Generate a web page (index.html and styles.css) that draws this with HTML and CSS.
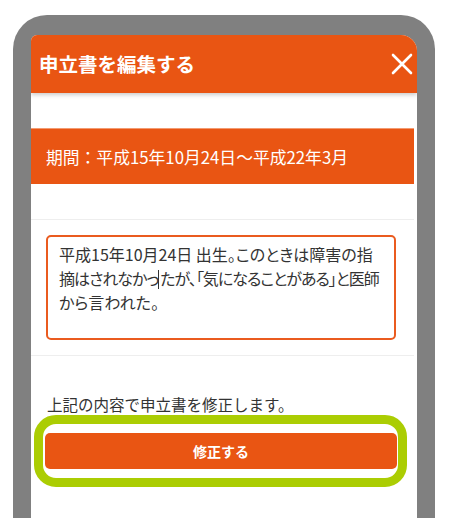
FILE: index.html
```html
<!DOCTYPE html>
<html lang="ja">
<head>
    <meta charset="UTF-8">
    <meta name="viewport" content="width=device-width, initial-scale=1.0">
    <title>申立書を編集する</title>
    <link rel="stylesheet" href="styles.css">
</head>
<body>

    <div class="phone">
        <div class="screen">
            <div class="modal-head">
                <h1 class="modal-title">申立書を編集する</h1>
                <button class="close-btn" aria-label="閉じる">
                    <svg width="22" height="22" viewBox="0 0 22 22">
                        <path d="M2 2 L20 20 M20 2 L2 20" stroke="#fff" stroke-width="2.6" stroke-linecap="round"/>
                    </svg>
                </button>
            </div>

            <div class="modal-body">
                <div class="period">期間：平成15年10月24日～平成22年3月</div>

                <div class="divider"></div>

                <div class="memo-wrap">
                    <div class="memo">平成15年10月24日 出生。このときは障害の指<br><span class="tight">摘はされなかっ<span class="caret"></span>たが、「気になることがある」と医師</span><br>から言われた。</div>
                </div>

                <div class="divider"></div>

                <p class="note">上記の内容で申立書を修正します。</p>

                <div class="ring">
                    <button class="submit-btn">修正する</button>
                </div>
            </div>
        </div>
    </div>

</body>
</html>
```

FILE: styles.css
```css
body {
    margin: 0;
    padding: 0;
    background-color: #fff;
    font-family: "Noto Sans CJK JP", "Noto Sans", sans-serif;
    color: #333;
}

.phone {
    width: 422px;
    height: 503px;
    margin: 15px 0 0 13px;
    padding: 20px 18px 0 18px;
    box-sizing: border-box;
    background-color: #808080;
    border-radius: 34px 34px 0 0;
}

.screen {
    height: 100%;
    background-color: #fff;
    border-radius: 6px 16px 0 0;
    overflow: hidden;
}

.modal-head {
    position: relative;
    height: 58px;
    padding: 0 3px 0 8px;
    display: flex;
    align-items: center;
    justify-content: space-between;
    background-color: #e95513;
    box-shadow: 0 2px 4px rgba(0, 0, 0, 0.2);
}

.modal-title {
    margin: 0;
    font-size: 19.5px;
    font-weight: bold;
    color: #fff;
    line-height: 1;
}

.close-btn {
    width: 24px;
    height: 24px;
    padding: 0;
    border: none;
    background: none;
    display: flex;
    align-items: center;
    justify-content: center;
    cursor: pointer;
}

.modal-body {
    margin-right: 3px;
    padding-top: 35px;
}

.period {
    height: 55px;
    padding-left: 15px;
    display: flex;
    align-items: center;
    border-top: 1px solid #f39a70;
    background-color: #e95513;
    color: #fff;
    font-size: 16.8px;
}

.divider {
    margin-top: 35px;
    border-top: 1px solid #eeeeee;
}

.memo-wrap + .divider {
    margin-top: 0;
}

.memo-wrap {
    padding: 15px 18px 15px 15px;
}

.memo {
    height: 105px;
    box-sizing: border-box;
    padding: 5px 8px 0 11px;
    border: 2px solid #ea5b1f;
    border-radius: 5px;
    font-size: 16px;
    line-height: 24px;
    white-space: nowrap;
    font-feature-settings: "palt";
    color: #333;
}

.tight {
    letter-spacing: -1px;
}

.caret {
    display: inline-block;
    width: 1px;
    height: 19px;
    margin: 0 1px 0 0;
    vertical-align: -4px;
    background-color: #333;
}

.note {
    margin: 37px 0 0 0;
    padding-left: 16px;
    font-size: 15.5px;
    line-height: 22px;
}

.ring {
    margin: 0 7px 0 3px;
    padding: 9px 1px 9px 2px;
    border: 9px solid #abcd03;
    border-radius: 22px;
}

.submit-btn {
    display: block;
    width: 100%;
    height: 36px;
    border: none;
    border-radius: 5px;
    background-color: #e95513;
    color: #fff;
    font-family: "Noto Sans CJK JP", "Noto Sans", sans-serif;
    font-size: 14px;
    font-weight: bold;
    cursor: pointer;
}
```
